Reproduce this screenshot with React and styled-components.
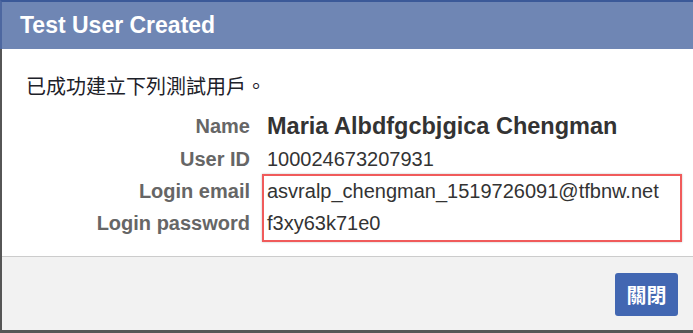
import React from "react";
import styled, { createGlobalStyle } from "styled-components";

const GlobalStyle = createGlobalStyle`
  html, body {
    margin: 0;
    padding: 0;
    background: #ffffff;
  }
  body {
    font-family: "Liberation Sans", "Noto Sans CJK TC", sans-serif;
  }
`;

const Dialog = styled.div`
  width: 693px;
  height: 333px;
  box-sizing: border-box;
  display: flex;
  flex-direction: column;
  border-left: 2px solid #565656;
  border-bottom: 3px solid #565656;
  background: #ffffff;
`;

const Header = styled.div`
  height: 47px;
  margin-left: -2px;
  padding-left: 18px;
  display: flex;
  align-items: center;
  border-top: 2px solid #3b5998;
  border-left: 2px solid #4d67a0;
  background: #6f86b4;
  color: #ffffff;
  font-size: 23px;
  font-weight: bold;
`;

const Body = styled.div`
  flex: 1;
  padding: 26px 0 16px 24px;
  color: #1d2129;
`;

const Intro = styled.p`
  margin: 0 0 10px;
  font-size: 20px;
  line-height: 24px;
  font-family: "Liberation Sans", "Noto Sans CJK TC", sans-serif;
`;

const InfoGrid = styled.div`
  display: grid;
  grid-template-columns: 224px auto;
  column-gap: 17px;
  justify-content: start;
`;

const Label = styled.div`
  grid-column: 1;
  grid-row: ${(p) => p.$row};
  text-align: right;
  color: #666666;
  font-weight: bold;
  font-size: 20px;
  line-height: ${(p) => (p.$large ? "26px" : "24px")};
  padding: 4px 0;
`;

const Value = styled.div`
  grid-column: 2;
  grid-row: ${(p) => p.$row};
  color: #333333;
  font-size: ${(p) => (p.$large ? "23.5px" : "20px")};
  font-weight: ${(p) => (p.$large ? "bold" : "normal")};
  line-height: ${(p) => (p.$large ? "26px" : "24px")};
  padding: 4px 0;
  white-space: nowrap;
`;

const Highlight = styled.div`
  grid-column: 2;
  grid-row: 3 / span 2;
  width: 420px;
  margin: -1px 0 -3px -5px;
  box-sizing: border-box;
  border: 2px solid #f05b5b;
  box-shadow: 0 0 2px rgba(0, 0, 0, 0.25);
  pointer-events: none;
`;

const Footer = styled.div`
  height: 74px;
  box-sizing: border-box;
  padding: 16px 15px 15px 0;
  display: flex;
  justify-content: flex-end;
  align-items: flex-start;
  border-top: 1px solid #cccccc;
  background: #f2f2f2;
`;

const CloseButton = styled.button`
  height: 43px;
  width: 63px;
  padding: 0;
  border: none;
  border-radius: 3px;
  background: #4267b2;
  color: #ffffff;
  font-family: "Noto Sans CJK TC", sans-serif;
  font-size: 20px;
  font-weight: bold;
  cursor: pointer;
`;

const rows = [
  { label: "Name", value: "Maria Albdfgcbjgica Chengman", large: true },
  { label: "User ID", value: "100024673207931" },
  { label: "Login email", value: "asvralp_chengman_1519726091@tfbnw.net" },
  { label: "Login password", value: "f3xy63k71e0" },
];

const App = () => (
  <>
    <GlobalStyle />
    <Dialog>
      <Header>Test User Created</Header>
      <Body>
        <Intro>已成功建立下列測試用戶。</Intro>
        <InfoGrid>
          {rows.map((row, i) => (
            <React.Fragment key={row.label}>
              <Label $large={row.large} $row={i + 1}>
                {row.label}
              </Label>
              <Value $large={row.large} $row={i + 1}>
                {row.value}
              </Value>
            </React.Fragment>
          ))}
          <Highlight />
        </InfoGrid>
      </Body>
      <Footer>
        <CloseButton type="button">關閉</CloseButton>
      </Footer>
    </Dialog>
  </>
);

export default App;
